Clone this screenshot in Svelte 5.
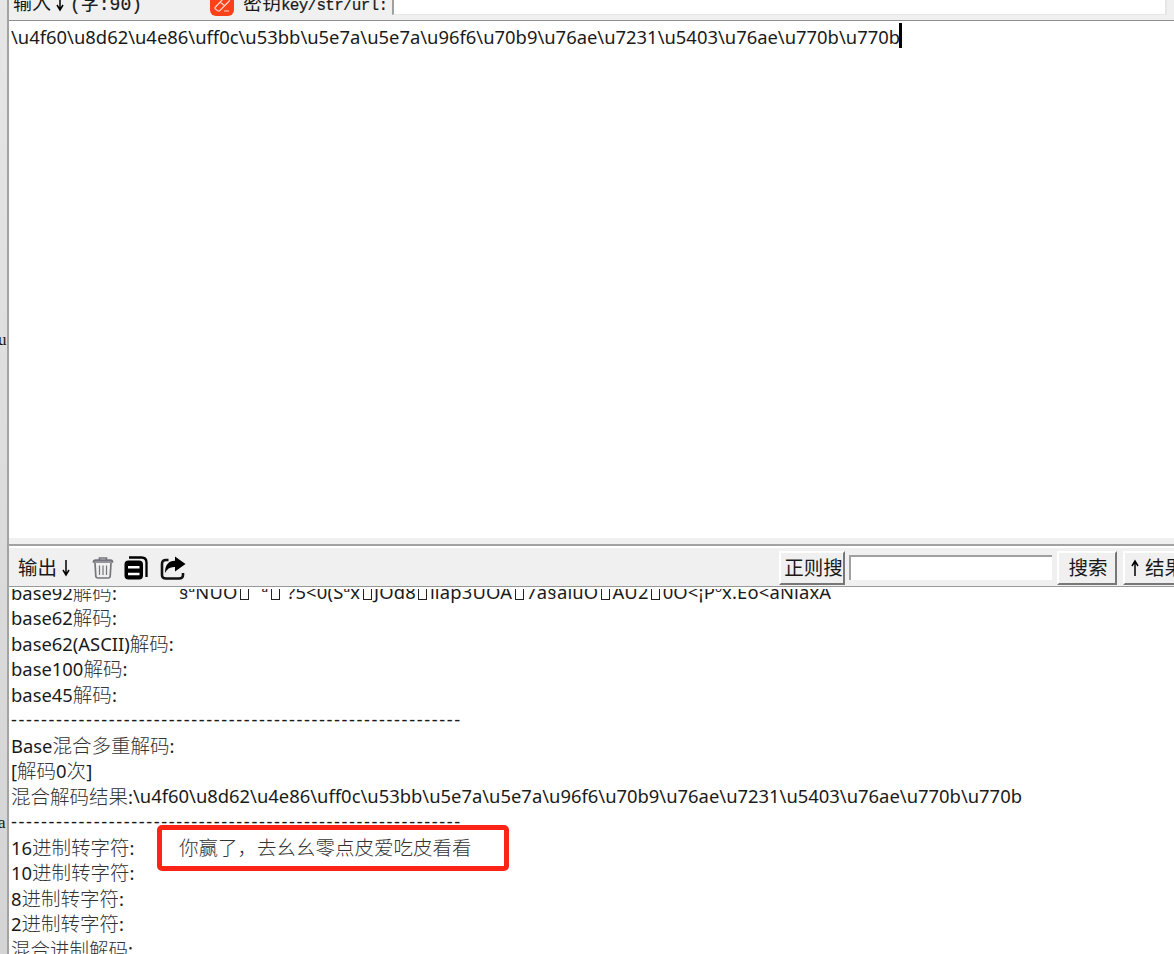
<script>
	const encoded =
		'\\u4f60\\u8d62\\u4e86\\uff0c\\u53bb\\u5e7a\\u5e7a\\u96f6\\u70b9\\u76ae\\u7231\\u5403\\u76ae\\u770b\\u770b';
	const rule = '-'.repeat(60);

	const lines = [
		{ label: 'base92解码:', value: '§ªNÙÖ▯  ª▯ ?5<0(Sªx▯JÖd8▯ìîap3ÙÖA▯7a§aîuÖ▯AÙ2▯0Ö<¡Pºx.Eô<aNîaxA', raw: true },
		{ label: 'base62解码:' },
		{ label: 'base62(ASCII)解码:' },
		{ label: 'base100解码:' },
		{ label: 'base45解码:' },
		{ label: rule, rule: true },
		{ label: 'Base混合多重解码:' },
		{ label: '[解码0次]' },
		{ label: '混合解码结果:', value: encoded, inline: true },
		{ label: rule, rule: true },
		{ label: '16进制转字符:', value: '你赢了，去幺幺零点皮爱吃皮看看', marked: true },
		{ label: '10进制转字符:' },
		{ label: '8进制转字符:' },
		{ label: '2进制转字符:' },
		{ label: '混合进制解码:' }
	];

	// han runs are set larger than the latin ones
	const runs = (text) => text.split(/([\u3000-\uffef]+|▯)/).filter(Boolean);
	const isHan = (run) => /[\u3000-\uffef]/.test(run);
</script>

{#snippet mixed(text)}
	{#each runs(text) as run}{#if run === '▯'}<i class="missing"></i>{:else}<span class:han={isHan(run)}>{run}</span>{/if}{/each}
{/snippet}

<div class="window">
	<div class="behind">
		<span class="peek first">u</span>
		<span class="peek second">a</span>
	</div>

	<div class="main">
		<div class="keybar">
			<div class="input-title">输入<svg class="arrow" viewBox="0 0 10 18"><path d="M5 1v15M2 11l3 5 3-5" /></svg><span class="mono">(字:90)</span></div>
			<svg class="eraser" viewBox="0 0 24 24">
				<rect width="24" height="24" rx="6" fill="#fb4119" />
				<path d="M5 15.5 14.5 5.5q1.5-1.3 3 0l1.3 1.3q1.2 1.4 0 2.7L9.5 19H8l-3-2.3zM10 10l5 4M14 19h5" />
			</svg>
			<div class="key-title">密钥<span class="mono">key/str/url:</span></div>
			<div class="key-field"></div>
		</div>

		<div class="input"><span class="code">{encoded}</span><i class="caret"></i></div>

		<div class="toolbar">
			<div class="output-title">输出<svg class="arrow" viewBox="0 0 10 18"><path d="M5 1v15M2 11l3 5 3-5" /></svg></div>
			<svg class="tool trash" viewBox="0 0 22 22">
				<path d="M1.500 5h19q0-1.800-2-1.800h-15q-2 0-2 1.800zM7.500 3V1h7v2M3 6l.8 13q.2 2 2 2h10.400q1.800 0 2-2L19 6" />
				<path class="thin" d="M7.500 8.500v9.500M11 8.500v9.500M14.500 8.500v9.500" />
			</svg>
			<svg class="tool copy" viewBox="0 0 24 24">
				<path d="M5 1.500h12.500q5 0 5 5V21" fill="none" stroke="#000" stroke-width="2.300" />
				<rect x="0.500" y="4.500" width="18.500" height="19" rx="4" />
				<path d="M4 11.300h11.500M4 18h11.500" stroke="#fff" stroke-width="2.600" />
			</svg>
			<svg class="tool share" viewBox="0 0 26 24">
				<path d="M8.500 4H6Q2 4 2 8v11q0 3.500 4 3.500h13q4 0 4-3.500v-2" fill="none" stroke="#111" stroke-width="2.600" />
				<path d="M15 .5l10.500 7.500L15 15.500v-4.500q-7-.5-10 6Q5 5 15 4.800z" />
			</svg>
			<div class="spacer"></div>
			<div class="btn regex">正则搜</div>
			<div class="search-field"></div>
			<div class="btn search">搜索</div>
			<div class="btn result"><svg class="arrow" viewBox="0 0 10 18"><path d="M5 17V2M2 7l3-5 3 5" /></svg>结果</div>
		</div>

		<div class="output">
			<div class="lines">
				{#each lines as line}
					<div class="line" class:rule={line.rule} class:inline={line.inline}>
						<span class="label">{@render mixed(line.label)}</span>
						{#if line.value}
							<span class="value" class:raw={line.raw} class:marked={line.marked}>{@render mixed(line.value)}</span>
						{/if}
					</div>
				{/each}
			</div>
		</div>
	</div>
</div>

<style>
:global(body) {
	margin: 0;
	overflow: hidden;
}
.window {
	display: flex;
	width: 1174px;
	height: 954px;
	overflow: hidden;
	background: #f0f0f0;
	color: #1a1a1a;
	font-family: "Noto Sans", "Noto Sans CJK SC", sans-serif;
}
.behind {
	width: 7px;
	flex: none;
	overflow: hidden;
	background: linear-gradient(#e6e6e6, #dedede 40%, #d4d4d4);
	border-right: 2px solid #a3a3a3;
	font: 17px/20px "Liberation Serif", serif;
}
.peek {
	display: block;
	margin-left: -2px;
}
.first {
	margin-top: 330px;
}
.second {
	margin-top: 463px;
}
.main {
	display: flex;
	flex-direction: column;
	flex: 1;
	min-width: 0;
}
.keybar {
	display: flex;
	height: 20px;
	flex: none;
	overflow: hidden;
	font-size: 19px;
	line-height: 24px;
}
.keybar > div:not(.key-field) {
	margin-top: -9px;
	flex: none;
	white-space: nowrap;
}
.mono {
	font-family: "Liberation Mono", "Noto Sans CJK SC", monospace;
	font-size: 16px;
	letter-spacing: -0.75px;
	-webkit-text-stroke: 0.2px #1a1a1a;
}
.input-title {
	width: 197px;
	padding-left: 4px;
	box-sizing: border-box;
}
.input-title .arrow {
	margin: 0 5px 0 4px;
}
.input-title .mono {
	font-size: 18px;
	letter-spacing: 0;
}
.eraser {
	width: 24px;
	height: 24px;
	margin: -8px 9px 0 4px;
	flex: none;
}
.eraser path {
	fill: none;
	stroke: #ffd8ca;
	stroke-width: 1.2;
}
.key-title {
	width: 149px;
}
.key-field {
	width: 771px;
	height: 14px;
	background: #fff;
	border-left: 2px solid #a0a0a0;
	border-right: 2px solid #e6e6e6;
	border-bottom: 1px solid #e6e6e6;
}
.arrow {
	width: 10px;
	height: 18px;
	vertical-align: -2px;
	fill: none;
	stroke: #000;
	stroke-width: 1.5;
}
.input {
	display: flex;
	height: 517px;
	padding-left: 2px;
	background: #fff;
	border-top: 1px solid #8f8f8f;
	font-size: 18.4px;
	line-height: 31px;
}
.caret {
	width: 3px;
	height: 25px;
	margin: 2px 0 0 -1px;
	background: #000;
}
.toolbar {
	display: flex;
	align-items: center;
	height: 40px;
	flex: none;
	margin-top: 6px;
	border-top: 2px solid #a2a2a2;
	border-bottom: 1px solid #999;
	box-shadow: inset 0 2px #fff;
	font-family: "Noto Sans CJK SC", sans-serif;
	font-size: 19.5px;
}
.output-title {
	width: 83px;
	padding-left: 9px;
	box-sizing: border-box;
	white-space: nowrap;
}
.output-title .arrow {
	margin-left: 4px;
}
.tool {
	flex: none;
	margin-top: 3px;
}
.trash {
	width: 22px;
	height: 22px;
	fill: none;
	stroke: #74747c;
	stroke-width: 1.7;
}
.trash .thin {
	stroke-width: 1.2;
}
.copy {
	width: 24px;
	height: 24px;
	margin-left: 10px;
}
.share {
	width: 26px;
	height: 24px;
	margin-left: 12px;
}
.spacer {
	flex: 1;
}
.btn {
	height: 34px;
	margin-top: 3px;
	box-sizing: border-box;
	flex: none;
	border: 2px solid #fff;
	border-right-color: #777;
	border-bottom-color: #777;
	line-height: 28px;
	text-align: center;
	white-space: nowrap;
	overflow: hidden;
}
.regex {
	width: 66px;
	padding-left: 3px;
}
.search-field {
	width: 203px;
	height: 25px;
	margin: 2px 5px 0 4px;
	background: #fff;
	border-top: 2px solid #a0a0a0;
	border-left: 2px solid #a0a0a0;
	box-sizing: border-box;
	flex: none;
}
.search {
	width: 60px;
	margin-right: 6px;
	padding-left: 2px;
}
.result {
	width: 51px;
	padding-left: 5px;
	border-right: none;
	text-align: left;
}
.result .arrow {
	margin-right: 5px;
}
.output {
	flex: 1;
	padding: 2px 0 0 2px;
	background: #fff;
	overflow: hidden;
	font-size: 18.4px;
}
.lines {
	height: 366px;
	overflow: hidden;
}
.line {
	display: flex;
	height: 25.5px;
	line-height: 25.5px;
	white-space: pre;
}
.line:first-child {
	margin-top: -10.5px;
}
.label {
	min-width: 168px;
}
.inline .label {
	min-width: 0;
}
.rule .label {
	letter-spacing: 1.59px;
}
.raw {
	letter-spacing: 0.17px;
}
.han {
	font-family: "Noto Sans CJK SC", sans-serif;
	font-size: 19.5px;
	font-weight: 300;
	color: #333;
	letter-spacing: 0;
}
.missing {
	display: inline-block;
	width: 7px;
	height: 13px;
	margin: 0 2.5px;
	border: 1px solid #222;
	vertical-align: -1px;
}
.marked {
	position: relative;
}
.marked::after {
	content: "";
	position: absolute;
	left: -22px;
	top: -9px;
	width: 342px;
	height: 36px;
	border: 5px solid #fb2416;
	border-radius: 5px;
}
</style>
